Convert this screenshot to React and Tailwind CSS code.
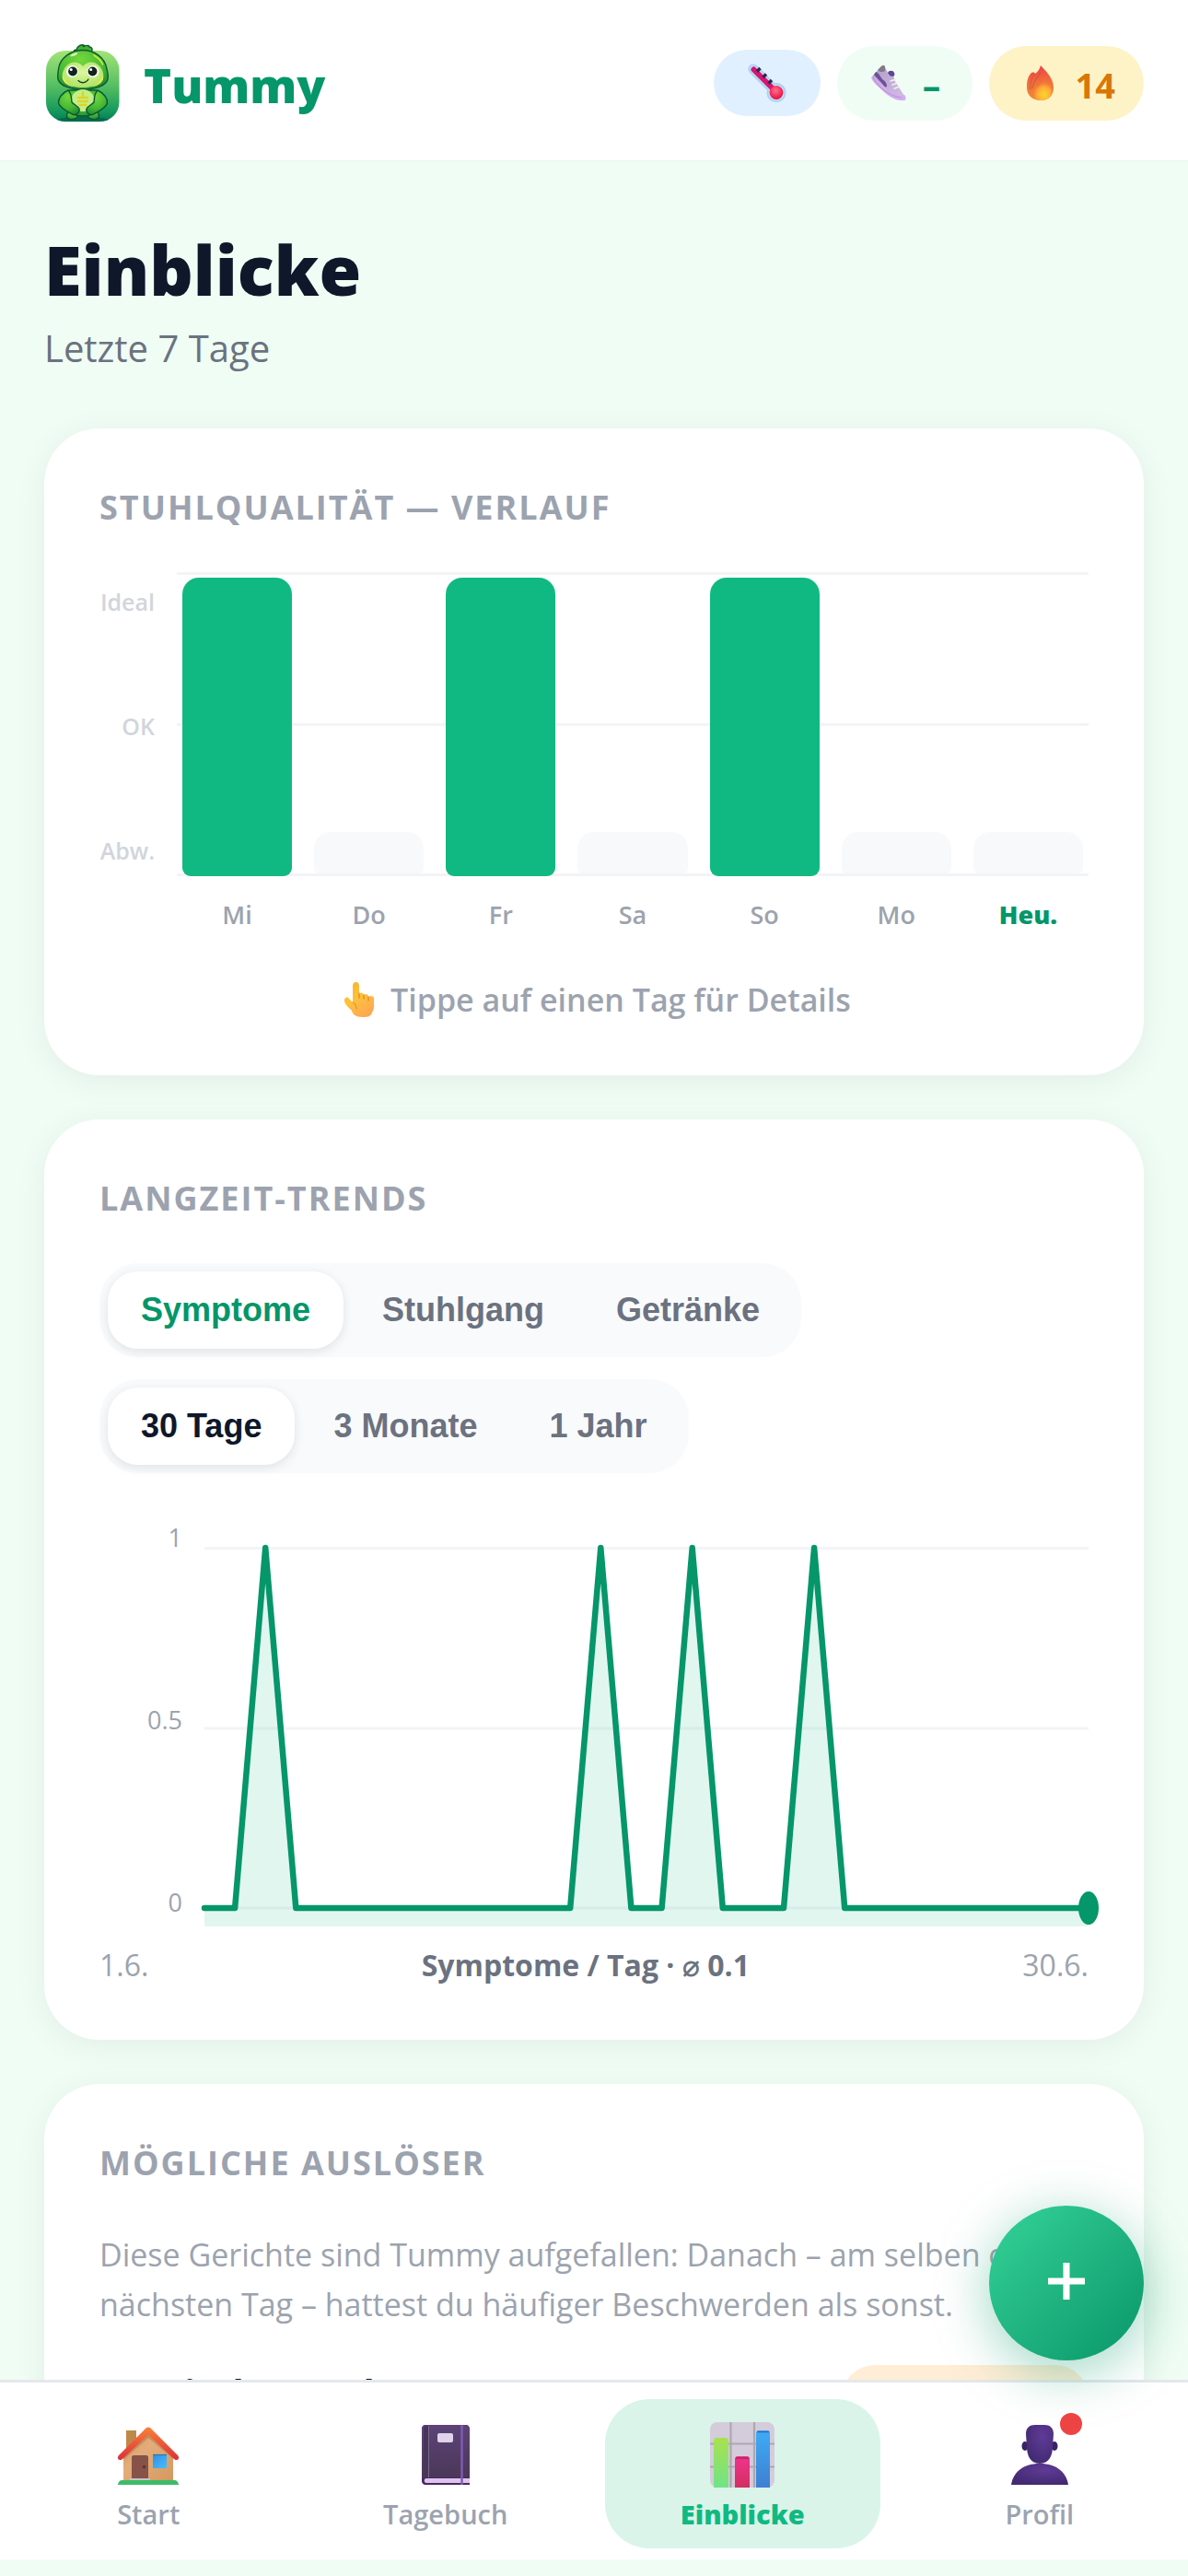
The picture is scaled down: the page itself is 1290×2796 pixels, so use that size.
import React, { useState } from "react";

function TummyLogo() {
  return (
    <svg viewBox="0 0 84 84" className="size-[84px] shrink-0" aria-hidden="true">
      <defs>
        <linearGradient id="tile" x1="0" y1="0" x2="0" y2="1">
          <stop offset="0" stopColor="#a3e478" />
          <stop offset="0.5" stopColor="#55be62" />
          <stop offset="0.85" stopColor="#159a5c" />
          <stop offset="1" stopColor="#067a55" />
        </linearGradient>
        <radialGradient id="skin" cx="0.45" cy="0.25" r="0.8">
          <stop offset="0" stopColor="#74d83e" />
          <stop offset="0.6" stopColor="#47b934" />
          <stop offset="1" stopColor="#1f8a35" />
        </radialGradient>
        <radialGradient id="face" cx="0.5" cy="0.4" r="0.7">
          <stop offset="0" stopColor="#dcf7a0" />
          <stop offset="1" stopColor="#a8e05a" />
        </radialGradient>
      </defs>
      <rect x="2" y="7" width="79.500" height="77" rx="21" fill="url(#tile)" />
      <path d="M14 82c12-5 44-5 56 0-6 2-50 2-56 0z" fill="#04684f" />
      <g stroke="#0c5a32" strokeWidth="1.400" strokeLinejoin="round">
        <path d="M27 72c-4 5-3 9 1 9.500 5 .5 8-1 9-5h10c1 4 4 5.500 9 5 4-.5 5-4.500 1-9.500z" fill="url(#skin)" />
        <path d="M27 50c-6 8-5 22 4 26 7 2.500 15 2.500 22 0 9-4 10-18 4-26z" fill="url(#skin)" />
        <path d="M34 9c-3-2-1-3 1-3 1-4 5-6 8-5 0 1 0 1-.5 1.500 4-2 7-1 6.500.5 3 0 4 3 2 5.500z" fill="#43b030" />
        <path d="M42 6.500C54 6.500 66 14 68 27c1 5 2 7 1 11-2 7-13 11-27 11S17 45 15 38c-1-4 0-6 .5-11C17 14 30 6.500 42 6.500z" fill="url(#skin)" />
      </g>
      <path d="M42 24c4-5 11-6 16-2 6 4 8 13 5 18-3 5-12 7-21 7s-18-2-21-7c-3-5-1-14 5-18 5-4 12-3 16 2z" fill="url(#face)" />
      <path d="M20 34c-1 7 6 11 12 12-6-2-9-6-12-12zM64 34c1 7-6 11-12 12 6-2 9-6 12-12z" fill="#f5ea4a" />
      <path d="M28 13c2-3 5-4 8-4 1 2-4 5-8 4z" fill="#d7f7a3" />
      <path d="M54 12c5 3 8 6 9.500 10" fill="none" stroke="#d5e93c" strokeWidth="1.500" strokeLinecap="round" />
      <circle cx="30.500" cy="29.500" r="6.500" fill="#fff" />
      <circle cx="53" cy="29.500" r="6.500" fill="#fff" />
      <circle cx="31" cy="29.500" r="4.900" fill="#10241d" />
      <circle cx="52.500" cy="29.500" r="4.900" fill="#10241d" />
      <circle cx="29.200" cy="27.500" r="1.500" fill="#fff" />
      <circle cx="50.700" cy="27.500" r="1.500" fill="#fff" />
      <path d="M37 39.500c3 3.200 8 3.200 11-1.500" fill="none" stroke="#15402a" strokeWidth="1.300" strokeLinecap="round" />
      <ellipse cx="42" cy="61" rx="12.500" ry="12" fill="#c4ee86" />
      <g fill="url(#skin)" stroke="#0c5a32" strokeWidth="1.400" strokeLinejoin="round">
        <path d="M26 50c-7 3-11 9-10.500 14 2 6 10 9 15 12 4 2 8.500-2 7.500-6-1.500-3-5-4-8-7-.5-4 0-9-4-13z" />
        <path d="M58 50c7 3 11 9 10.500 14-2 6-10 9-15 12-4 2-8.500-2-7.500-6 1.500-3 5-4 8-7 .5-4 0-9 4-13z" />
      </g>
      <path d="M42 52v5M37 58h10M37 62h10M38.500 66h7" stroke="#d9d62c" strokeWidth="2.400" strokeLinecap="round" />
    </svg>
  );
}

function Thermometer() {
  return (
    <svg viewBox="0 0 42 42" className="size-[42px]" aria-hidden="true">
      <defs>
        <radialGradient id="bulb" cx="0.45" cy="0.35" r="0.6">
          <stop offset="0" stopColor="#ff6f8d" />
          <stop offset="1" stopColor="#e91543" />
        </radialGradient>
      </defs>
      <path d="M6 6 30 30" stroke="#a9cff5" strokeWidth="11" strokeLinecap="round" />
      <circle cx="31" cy="31.500" r="10.500" fill="#a9cff5" />
      <path d="M6 6 30 30" stroke="#c6e0fa" strokeWidth="8" strokeLinecap="round" />
      <circle cx="31" cy="31.500" r="8.800" fill="#c6e0fa" />
      <path d="M6.500 6.500 29 29" stroke="#d3166f" strokeWidth="6" strokeLinecap="round" />
      <circle cx="31" cy="31.500" r="7.400" fill="url(#bulb)" />
      <path d="M10 8.500 13.500 5M16.500 15l3.500-3.500M22.500 21.500 26 18" stroke="#31264f" strokeWidth="3.400" />
    </svg>
  );
}

function Shoe() {
  return (
    <svg viewBox="0 0 40 40" className="size-10" aria-hidden="true">
      <defs>
        <linearGradient id="shoeBody" x1="0" y1="0" x2="1" y2="1">
          <stop offset="0" stopColor="#b09acb" />
          <stop offset="1" stopColor="#d3c3e2" />
        </linearGradient>
      </defs>
      <path d="M2 13 12 2c2-2 4-1 4 1l3 6c2 1 3 0 5 2 2 2 2 4 2 6l11 17c2 3 2 5-1 5-8 0-14-5-20-10C10 23 5 19 2 13z" fill="url(#shoeBody)" />
      <path d="M8 6 12 2c2-2 4-1 4 1v4c-3 2-6 1-8-1z" fill="#807a82" />
      <path d="M6 8c3 1 5 5 7 8 3 2 5 4 5 8-1 1-3 0-4-2L4 11z" fill="#6a5296" />
      <path d="M19 9c1-3 6-3 7 0 1 2 0 3-1 4-3 0-4-1-6-4z" fill="#5d4695" />
      <path d="M1 14c2-2 3-1 5 1 7 9 17 16 25 18 3 1 6-1 7 1 1 3 0 5-3 5-9 0-16-5-22-11C8 23 2 19 1 14z" fill="#d4aef0" />
      <path d="M3 14c6 11 17 20 31 22" stroke="#b993d8" strokeWidth="1.200" fill="none" />
      <path d="m22 18 6-2M24 22l6-2M26 26l6-2" stroke="#f3edf8" strokeWidth="1.600" strokeLinecap="round" />
    </svg>
  );
}

function Flame() {
  return (
    <svg viewBox="0 0 32 40" className="h-10 w-8" aria-hidden="true">
      <defs>
        <linearGradient id="flameOuter" x1="0.4" y1="0" x2="0.5" y2="1">
          <stop offset="0" stopColor="#ee3f44" />
          <stop offset="0.5" stopColor="#f0703b" />
          <stop offset="1" stopColor="#f38a34" />
        </linearGradient>
        <radialGradient id="flameInner" cx="0.6" cy="0.75" r="0.6">
          <stop offset="0" stopColor="#ffd52e" />
          <stop offset="0.6" stopColor="#ffab35" />
          <stop offset="1" stopColor="#f6803a" stopOpacity="0.200" />
        </radialGradient>
      </defs>
      <path d="M16 1c5 6 14 13 14 24 0 9-6 14-14 14S1 34 1 25c0-7 1-12 5-16 2-1 4 0 4 1 3-2 5-5 6-9z" fill="url(#flameOuter)" />
      <path d="M10 10C6 16 4 20 5 27M16 8c-3 7-8 9-9 18" stroke="#c9553a" strokeWidth="1.200" fill="none" opacity="0.700" />
      <path d="M20 15c3 4 8 7 8 13 0 7-5 11-11 11S6 35 7 29c1-5 3-6 5-5 2 0 5-3 8-9z" fill="url(#flameInner)" />
    </svg>
  );
}

function PointingHand() {
  return (
    <svg viewBox="0 0 34 40" className="h-10 w-[34px] shrink-0" aria-hidden="true">
      <defs>
        <linearGradient id="hand" x1="0" y1="0" x2="0.6" y2="1">
          <stop offset="0" stopColor="#f5b02c" />
          <stop offset="0.5" stopColor="#fdc33a" />
          <stop offset="1" stopColor="#ffa852" />
        </linearGradient>
      </defs>
      <path d="M12.500 1c2.500 0 3.500 2 3.500 4v9c2-2 4-2 5 1 2-2 5-1 5 2 3-2 6-1 6 2v8c0 4-1 5-2 7-1 4-4 5-10 5-8 0-11-3-12-7-3-3-8-7-8-11 0-3 3-5 5-2l4 4V5c0-2 1-4 3.500-4z" fill="url(#hand)" />
      <path d="M16 13v5M21 15v4M26 17v4" stroke="#e08a25" strokeWidth="1.300" strokeLinecap="round" />
      <path d="M9 23c3 1 4 4 4 7" stroke="#e59a2c" strokeWidth="1.300" fill="none" strokeLinecap="round" />
    </svg>
  );
}

function House() {
  return (
    <svg viewBox="0 0 72 72" className="size-[72px]" aria-hidden="true">
      <defs>
        <linearGradient id="roof" x1="0" y1="0" x2="0" y2="1">
          <stop offset="0" stopColor="#fb8036" />
          <stop offset="1" stopColor="#dc3039" />
        </linearGradient>
        <linearGradient id="wall" x1="0" y1="0" x2="1" y2="1">
          <stop offset="0" stopColor="#c88f57" />
          <stop offset="0.4" stopColor="#e3ad7a" />
          <stop offset="1" stopColor="#d3995f" />
        </linearGradient>
        <linearGradient id="pane" x1="0" y1="0" x2="1" y2="1">
          <stop offset="0" stopColor="#2f8fe6" />
          <stop offset="1" stopColor="#47bdfa" />
        </linearGradient>
      </defs>
      <rect x="12" y="10" width="11" height="32" fill="#c08848" />
      <path d="M9 37 36 10l27 27v28H9z" fill="url(#wall)" />
      <path d="M9 42V37L36 14l27 23v4L36 18z" fill="#a86f45" opacity="0.450" />
      <path d="M33.500 7.500c1.500-1.500 3.500-1.500 5 0L68 37c2 2 1 5-1 5-1 0-2 0-3-1L36 14.500 8 41c-1 1-2 1-3 1-2 0-3-3-1-5z" fill="url(#roof)" />
      <path d="M18 39c0-1 1-2 2-2h14c1 0 2 1 2 2v25H18z" fill="#875248" />
      <circle cx="31.500" cy="49.500" r="1.700" fill="#5e332e" />
      <rect x="16" y="62" width="22" height="3" fill="#c9c1c9" />
      <rect x="41" y="36" width="15" height="15" rx="1.500" fill="url(#pane)" />
      <path d="M41 36.500h15" stroke="#2f74b8" strokeWidth="1.200" />
      <path d="M7 64h58c2 0 4 3 4 5H3c0-2 2-5 4-5z" fill="#3dbb68" />
    </svg>
  );
}

function Book() {
  return (
    <svg viewBox="0 0 72 72" className="size-[72px]" aria-hidden="true">
      <defs>
        <linearGradient id="cover" x1="0" y1="0" x2="0" y2="1">
          <stop offset="0" stopColor="#5d4378" />
          <stop offset="1" stopColor="#4a3757" />
        </linearGradient>
      </defs>
      <path d="M10 8c0-2 1.500-4 4-4h44c2 0 4 2 4 4v61H14c-2.500 0-4-2-4-4z" fill="#4b2565" />
      <path d="M10 8c0-2 1.500-4 4-4h44c2 0 4 2 4 4v53H14c-2 0-3 1-4 2z" fill="url(#cover)" />
      <path d="M12 8c0-2 1-3 3-3h2v56h-3l-2 1z" fill="#48365a" />
      <path d="M17.500 5v56" stroke="#7a6a8e" strokeWidth="1" />
      <path d="M15 62h47v5H15c-3 0-3-5 0-5z" fill="#dcc5ea" />
      <path d="M53.500 4v65" stroke="#7f5cb4" strokeWidth="2.400" />
      <rect x="27" y="13" width="17" height="10" rx="2" fill="#e1d3ea" />
    </svg>
  );
}

function BarsIcon() {
  return (
    <svg viewBox="0 0 72 72" className="size-[72px]" aria-hidden="true">
      <defs>
        <linearGradient id="barGreen" x1="0" y1="0" x2="0" y2="1">
          <stop offset="0" stopColor="#a9e14f" />
          <stop offset="1" stopColor="#6fe487" />
        </linearGradient>
        <linearGradient id="barPink" x1="0" y1="0" x2="0" y2="1">
          <stop offset="0" stopColor="#f0338e" />
          <stop offset="1" stopColor="#d23061" />
        </linearGradient>
        <linearGradient id="barBlue" x1="0" y1="0" x2="0" y2="1">
          <stop offset="0" stopColor="#3eacf5" />
          <stop offset="1" stopColor="#3f7fd2" />
        </linearGradient>
      </defs>
      <rect x="1" y="1" width="70" height="71" rx="8" fill="#d5ccdb" />
      <path d="M23.500 1v71M49 1v71M1 24.500h70M1 49.500h70" stroke="#ada7b4" strokeWidth="2.200" />
      <path d="M5 72V21c0-2 1.500-3 3-3h10c2 0 3 1 3 3v51z" fill="url(#barGreen)" />
      <path d="M28 72V41c0-2 1.500-3 3-3h10c2 0 3 1 3 3v31z" fill="url(#barPink)" />
      <path d="M51 72V13c0-2 1.500-3 3-3h9c2 0 3 1 3 3v59z" fill="url(#barBlue)" />
      <path d="M29 40h14" stroke="#b32a56" strokeWidth="1.600" />
      <path d="M52 11.500h13" stroke="#2f6fc0" strokeWidth="1.600" />
    </svg>
  );
}

function Person() {
  return (
    <svg viewBox="0 0 72 72" className="size-[72px]" aria-hidden="true">
      <defs>
        <radialGradient id="bust" cx="0.6" cy="0.3" r="0.7">
          <stop offset="0" stopColor="#5f3b96" />
          <stop offset="1" stopColor="#432a72" />
        </radialGradient>
      </defs>
      <ellipse cx="20" cy="27" rx="3.500" ry="5" fill="#3a2164" />
      <ellipse cx="52" cy="27" rx="3.500" ry="5" fill="#3a2164" />
      <path d="M21 14C21 7 25 4 31 4h10c6 0 10 3 10 10l-1 14c0 9-4 18-14 18S22 37 22 28z" fill="url(#bust)" />
      <path d="M5 69c2-13 12-23 31-23s29 10 31 23z" fill="url(#bust)" />
    </svg>
  );
}

const days = [
  { label: "Mi", ideal: true },
  { label: "Do" },
  { label: "Fr", ideal: true },
  { label: "Sa" },
  { label: "So", ideal: true },
  { label: "Mo" },
  { label: "Heu.", today: true },
];

const peakDays = [2, 13, 16, 20];
const trend = Array.from({ length: 30 }, (_, i) => {
  const x = ((i * 960) / 29).toFixed(1);
  return `${x},${peakDays.includes(i) ? 21 : 412}`;
}).join(" ");

function Card({ title, children }) {
  return (
    <section className="rounded-[60px] bg-white px-[60px] pt-[62px] pb-[58px] shadow-[0_6px_36px_rgba(0,0,0,0.06)]">
      <h2 className="text-[36px] leading-[48px] font-bold tracking-[2px] text-[#9ca3af] uppercase">{title}</h2>
      {children}
    </section>
  );
}

function Segmented({ label, options, value, onChange, activeColor }) {
  return (
    <div role="group" aria-label={label} className="flex w-fit gap-1.5 rounded-[42px] bg-[#f9fafb] p-[9px]">
      {options.map((o) => (
        <button
          key={o}
          type="button"
          aria-pressed={o === value}
          onClick={() => onChange(o)}
          className={
            "rounded-[33px] px-9 font-['Liberation_Sans',Arial,sans-serif] text-[36px] leading-[84px] font-bold whitespace-nowrap " +
            (o === value ? "bg-white shadow-[0_3px_12px_rgba(0,0,0,0.1)] " + activeColor : "text-[#6b7280]")
          }
        >
          {o}
        </button>
      ))}
    </div>
  );
}

function StoolChart() {
  return (
    <>
      <div className="mt-[46px] flex gap-6">
        <div className="flex w-[60px] flex-col items-end justify-between pt-[14px] pb-[10px] text-[25px] leading-9 font-semibold whitespace-nowrap text-[#d1d5db]">
          <span>Ideal</span>
          <span>OK</span>
          <span>Abw.</span>
        </div>
        <div className="relative h-[330px] flex-1">
          <div className="absolute inset-0 flex flex-col justify-between" aria-hidden="true">
            <div className="h-[3px] bg-[#f3f4f6]" />
            <div className="h-[3px] bg-[#f3f4f6]" />
            <div className="h-[3px] bg-[#f3f4f6]" />
          </div>
          <div className="relative flex h-full items-end gap-6 px-1.5">
            {days.map((d) => (
              <button
                key={d.label}
                type="button"
                aria-label={d.label}
                className={
                  "flex-1 rounded-t-[18px] rounded-b-[9px] " +
                  (d.ideal ? "h-[324px] bg-[#10b981]" : "h-12 bg-[#f1f5f9]/60")
                }
              />
            ))}
          </div>
        </div>
      </div>
      <div className="mt-6 ml-[84px] flex gap-6 px-1.5 text-[27px] leading-9 font-semibold text-[#9ca3af]">
        {days.map((d) => (
          <span
            key={d.label}
            className={d.today ? "flex-1 text-center font-black text-[#059669]" : "flex-1 text-center"}
          >
            {d.label}
          </span>
        ))}
      </div>
      <p className="mt-[50px] flex items-center justify-center gap-4 pl-2 text-[34px] leading-[48px] font-semibold text-[#9ca3af]">
        <PointingHand />
        Tippe auf einen Tag für Details
      </p>
    </>
  );
}

function TrendChart() {
  return (
    <>
      <div className="mt-[52px] flex gap-6">
        <div className="flex w-[90px] flex-col items-end justify-between pb-2 text-[27px] leading-9 text-[#9ca3af]">
          <span>1</span>
          <span>0.5</span>
          <span>0</span>
        </div>
        <svg
          viewBox="0 0 960 432"
          preserveAspectRatio="none"
          className="mt-2 h-[432px] min-w-0 flex-1 overflow-visible"
          role="img"
          aria-label="Symptome pro Tag"
        >
          <path d="M0 21.500h960M0 217h960M0 412h960" stroke="#f3f4f6" strokeWidth="3" />
          <polygon points={`0,432 ${trend} 960,432`} fill="#10b981" fillOpacity="0.120" />
          <polyline points={trend} fill="none" stroke="#059669" strokeWidth="6.500" strokeLinejoin="round" strokeLinecap="round" />
          <ellipse cx="960" cy="412" rx="11" ry="18" fill="#059669" />
        </svg>
      </div>
      <div className="mt-[19px] flex justify-between text-[32px] leading-[46px] text-[#9ca3af]">
        <span>1.6.</span>
        <span className="font-bold text-[#6b7280]">Symptome / Tag · ⌀ 0.1</span>
        <span>30.6.</span>
      </div>
    </>
  );
}

const tabs = [
  { label: "Start", Icon: House },
  { label: "Tagebuch", Icon: Book },
  { label: "Einblicke", Icon: BarsIcon, active: true },
  { label: "Profil", Icon: Person, badge: true },
];

export default function App() {
  const [metric, setMetric] = useState("Symptome");
  const [range, setRange] = useState("30 Tage");

  return (
    <div className="flex h-screen flex-col overflow-hidden bg-[#f0fdf4] font-['Open_Sans','Noto_Sans','DejaVu_Sans',sans-serif]">
      <header className="flex shrink-0 items-center justify-between bg-white px-12 pt-12 pb-[42px] shadow-[0_1px_2px_rgba(0,0,0,0.04)]">
        <a href="#start" className="flex items-center gap-6">
          <TummyLogo />
          <span className="pt-1 text-[51px] leading-[72px] font-black text-[#059669]">Tummy</span>
        </a>
        <div className="flex items-center gap-[18px]">
          <button type="button" aria-label="Symptome" className="flex h-[72px] items-center rounded-full bg-[#e0f0fe] px-[37px]">
            <Thermometer />
          </button>
          <button type="button" className="flex h-[81px] items-center gap-4 rounded-full bg-[#f0fdf4] pr-[33px] pl-9 text-[39px] font-bold text-[#059669]">
            <Shoe />
            <span className="w-[22px] pt-1 text-center">–</span>
          </button>
          <button type="button" className="flex h-[81px] items-center gap-[22px] rounded-full bg-[#fef3c7] pr-[31px] pl-10 text-[38px] font-bold text-[#d97706]">
            <Flame />
            <span className="pt-1">14</span>
          </button>
        </div>
      </header>

      <main className="min-h-0 flex-1 overflow-y-auto px-12 pt-[71px] [scrollbar-width:none]">
        <h1 className="text-[74px] leading-[96px] font-black text-[#0f172a]">Einblicke</h1>
        <p className="mt-[7px] text-[40px] leading-[60px] text-[#6b7280]">Letzte 7 Tage</p>

        <div className="mt-[57px] flex flex-col gap-12 pb-[280px]">
          <Card title="Stuhlqualität — Verlauf">
            <StoolChart />
          </Card>

          <Card title="Langzeit-Trends">
            <div className="mt-[46px] flex flex-col gap-6">
              <Segmented
                label="Messwert"
                options={["Symptome", "Stuhlgang", "Getränke"]}
                value={metric}
                onChange={setMetric}
                activeColor="text-[#059669]"
              />
              <Segmented
                label="Zeitraum"
                options={["30 Tage", "3 Monate", "1 Jahr"]}
                value={range}
                onChange={setRange}
                activeColor="text-[#0f172a]"
              />
            </div>
            <TrendChart />
          </Card>

          <Card title="Mögliche Auslöser">
            <p className="mt-12 text-[34px] leading-[54px] text-[#9ca3af]">
              Diese Gerichte sind Tummy aufgefallen: Danach – am selben oder nächsten Tag – hattest du häufiger
              Beschwerden als sonst.
            </p>
            <div className="mt-[39px] flex items-start justify-between">
              <span className="text-[40px] leading-[60px] font-bold text-[#0f172a]">Gemischter Salat</span>
              <span className="rounded-[36px] bg-[#ffedd5] px-[68px] text-[32px] leading-[78px] font-bold text-[#c2410c]">auffällig</span>
            </div>
          </Card>
        </div>
      </main>

      <nav className="mb-[18px] grid shrink-0 grid-cols-4 border-t-[3px] border-[#e5e7eb] bg-white pt-[18px] pb-3">
        {tabs.map(({ label, Icon, active, badge }) => (
          <a
            key={label}
            href={"#" + label.toLowerCase()}
            aria-current={active ? "page" : undefined}
            className={
              "mx-3 flex flex-col items-center gap-2 rounded-[48px] pt-6 pb-4 text-[29px] leading-[42px] " +
              (active ? "bg-[#daf4ea] font-black text-[#10b981]" : "font-semibold text-[#9ca3af]")
            }
          >
            <span className="relative">
              <Icon />
              {badge && <span className="absolute -top-[9px] -right-2.5 size-6 rounded-full bg-[#ef4444]" />}
            </span>
            {label}
          </a>
        ))}
      </nav>

      <button
        type="button"
        aria-label="Eintrag hinzufügen"
        className="fixed right-12 bottom-[234px] flex size-[168px] items-center justify-center rounded-full bg-linear-135 from-[#34d399] to-[#059669] pb-1 shadow-[0_12px_60px_rgba(5,150,105,0.4)]"
      >
        <svg viewBox="0 0 42 42" className="size-[42px]" aria-hidden="true">
          <path d="M21 1v40M1 21h40" stroke="#fff" strokeWidth="7" />
        </svg>
      </button>
    </div>
  );
}
